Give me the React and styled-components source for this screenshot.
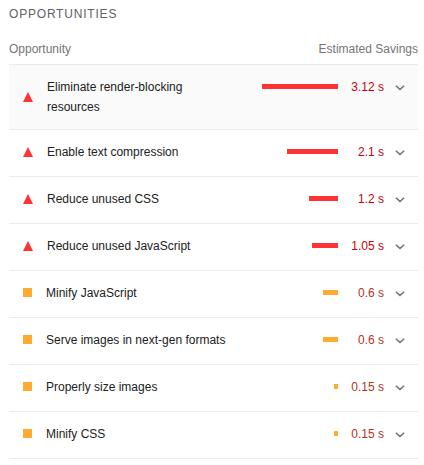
import React from "react";
import styled, { createGlobalStyle } from "styled-components";

const GlobalStyle = createGlobalStyle`
  *, *::before, *::after { box-sizing: border-box; }
  body {
    margin: 0;
    background: #fff;
    color: #212121;
    font: 12px/20px "Liberation Sans", Arial, sans-serif;
  }
`;

const Panel = styled.main`
  width: 409px;
  margin-left: 9px;
  padding-top: 4px;
`;

const Title = styled.h2`
  margin: 0;
  font-size: 12px;
  font-weight: 400;
  line-height: 20px;
  letter-spacing: 0.8px;
  color: #616161;
  text-transform: uppercase;
`;

const Header = styled.div`
  display: flex;
  justify-content: space-between;
  margin-top: 15px;
  height: 25px;
  color: #757575;
  white-space: nowrap;
`;

const List = styled.ul`
  list-style: none;
  margin: 0;
  padding: 0;
  border-top: 1px solid #ebebeb;
`;

const Row = styled.li`
  display: flex;
  align-items: flex-start;
  min-height: 47px;
  padding: 12px 13px 12px 14px;
  border-bottom: 1px solid #ebebeb;
  background: ${(p) => (p.$active ? "#fafafa" : "#fff")};
`;

const Marker = styled.div`
  align-self: ${(p) => (p.$centered ? "center" : "flex-start")};
  display: flex;
  align-items: center;
  flex: none;
  height: 20px;
  margin-right: 14px;
`;

const Triangle = styled.svg`
  display: block;
  width: 10px;
  height: 10px;
  fill: #f33;
`;

const Square = styled.div`
  width: 9px;
  height: 9px;
  margin-bottom: 1px;
  background: #fa3;
`;

const Name = styled.div`
  width: ${(p) => (p.$active ? "150px" : "auto")};
  white-space: ${(p) => (p.$active ? "normal" : "nowrap")};
`;

const Savings = styled.div`
  display: flex;
  align-items: flex-start;
  margin-left: auto;
`;

const Bar = styled.div`
  height: 5px;
  margin-top: 7px;
  background: ${(p) => (p.$severe ? "#f33" : "#fa3")};
`;

const Amount = styled.div`
  width: 46px;
  text-align: right;
  white-space: nowrap;
  color: ${(p) => (p.$severe ? "#c7000a" : "#b8321a")};
`;

const Chevron = styled.svg`
  display: block;
  width: 10px;
  height: 6px;
  margin: 8px 0 0 11px;
  fill: none;
  stroke: #757575;
  stroke-width: 1.5;
`;

const items = [
  { name: "Eliminate render-blocking resources", amount: "3.12 s", bar: 76, severe: true, active: true },
  { name: "Enable text compression", amount: "2.1 s", bar: 51, severe: true },
  { name: "Reduce unused CSS", amount: "1.2 s", bar: 29, severe: true },
  { name: "Reduce unused JavaScript", amount: "1.05 s", bar: 26, severe: true },
  { name: "Minify JavaScript", amount: "0.6 s", bar: 15 },
  { name: "Serve images in next-gen formats", amount: "0.6 s", bar: 15 },
  { name: "Properly size images", amount: "0.15 s", bar: 4 },
  { name: "Minify CSS", amount: "0.15 s", bar: 4 },
];

export default function App() {
  return (
    <Panel>
      <GlobalStyle />
      <Title>Opportunities</Title>
      <Header>
        <span>Opportunity</span>
        <span>Estimated Savings</span>
      </Header>
      <List>
        {items.map((item) => (
          <Row key={item.name} $active={item.active}>
            <Marker $centered={item.active}>
              {item.severe ? (
                <Triangle viewBox="0 0 10 10">
                  <path d="M5 0L10 10H0Z" />
                </Triangle>
              ) : (
                <Square />
              )}
            </Marker>
            <Name $active={item.active}>{item.name}</Name>
            <Savings>
              <Bar $severe={item.severe} style={{ width: item.bar }} />
              <Amount $severe={item.severe}>{item.amount}</Amount>
              <Chevron viewBox="0 0 10 6">
                <path d="M0.8 0.7L5 4.4L9.2 0.7" />
              </Chevron>
            </Savings>
          </Row>
        ))}
      </List>
    </Panel>
  );
}
